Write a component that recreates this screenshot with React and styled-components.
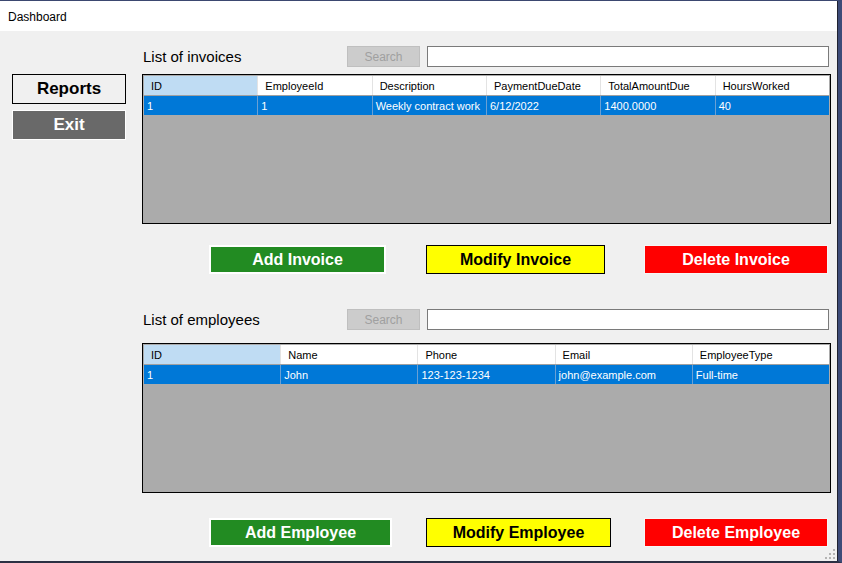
import React from 'react';
import styled, { createGlobalStyle } from 'styled-components';

const GlobalStyle = createGlobalStyle`
  body {
    margin: 0;
    overflow: hidden;
    font-family: "Liberation Sans", Arial, sans-serif;
  }
  * { box-sizing: border-box; }
`;

const Window = styled.div`
  width: 842px;
  height: 563px;
  display: flex;
  flex-direction: column;
  border-top: 1px solid #3b4770;
  border-right: 4px solid #3d4b78;
  border-bottom: 2px solid #2c3043;
`;

const Frame = styled.div`
  flex: 1;
  display: flex;
  flex-direction: column;
  border-right: 1px solid #1f2230;
`;

const TitleBar = styled.div`
  height: 30px;
  background: #ffffff;
  display: flex;
  align-items: center;
  padding: 2px 0 0 8px;
  font-size: 12px;
  color: #000;
`;

const Body = styled.div`
  flex: 1;
  display: flex;
  background: #f0f0f0;
  position: relative;
`;

const Sidebar = styled.div`
  width: 126px;
  padding: 43px 0 0 12px;
  display: flex;
  flex-direction: column;
  gap: 6px;
`;

const SideButton = styled.button`
  width: 114px;
  height: 30px;
  font-family: "Liberation Sans", Arial, sans-serif;
  font-size: 17px;
  font-weight: bold;
  padding: 0;
  cursor: pointer;
  color: ${p => (p.$dark ? '#ffffff' : '#000000')};
  background: ${p => (p.$dark ? '#696969' : '#f0f0f0')};
  border: 1px solid ${p => (p.$dark ? '#ffffff' : '#000000')};
`;

const Main = styled.div`
  width: 689px;
  margin-left: 16px;
  padding-top: 15px;
  display: flex;
  flex-direction: column;
`;

const Section = styled.div`
  display: flex;
  flex-direction: column;
  margin-top: ${p => p.$top || 0}px;
`;

const HeaderRow = styled.div`
  height: 21px;
  display: flex;
  align-items: center;
`;

const ListTitle = styled.div`
  width: 205px;
  padding-left: 1px;
  font-size: 15px;
  color: #000;
`;

const SearchButton = styled.button`
  width: 73px;
  height: 21px;
  padding: 0;
  font-family: "Liberation Sans", Arial, sans-serif;
  font-size: 12px;
  color: #a0a0a0;
  background: #cccccc;
  border: 1px solid #bfbfbf;
`;

const SearchInput = styled.input`
  flex: 1;
  height: 21px;
  margin: 0 2px 0 7px;
  border: 1px solid #7a7a7a;
  background: #fff;
  outline: none;
`;

const Grid = styled.div`
  height: 150px;
  margin-top: ${p => p.$top}px;
  border: 1px solid #000;
  padding: 1px;
  background: #ababab;
  display: flex;
  flex-direction: column;
`;

const Row = styled.div`
  display: flex;
  height: ${p => (p.$head ? 20 : 19)}px;
  background: ${p => (p.$head ? '#ffffff' : '#0078d7')};
  border-bottom: ${p => (p.$head ? '1px solid #a0a0a0' : 'none')};
`;

const Cell = styled.div`
  flex: 1;
  display: flex;
  align-items: center;
  font-size: 11px;
  white-space: nowrap;
  overflow: hidden;
  padding-left: ${p => (p.$head ? 7 : 3)}px;
  color: ${p => (p.$head ? '#000' : '#fff')};
  background: ${p => (p.$sel ? '#bfdcf3' : 'transparent')};
  border-right: 1px solid ${p => (p.$head ? '#e3e3e3' : '#6aa0d4')};
  &:last-child { border-right: none; }
`;

const ButtonRow = styled.div`
  display: grid;
  grid-template-columns: 217px 218px 184px;
  margin: ${p => p.$top}px 0 0 67px;
`;

const ActionButton = styled.button`
  width: ${p => p.$w}px;
  height: 29px;
  padding: 0;
  font-family: "Liberation Sans", Arial, sans-serif;
  font-size: 16px;
  font-weight: bold;
  cursor: pointer;
  color: ${p => (p.$kind === 'modify' ? '#000' : '#fff')};
  background: ${p =>
    p.$kind === 'add' ? '#228b22' : p.$kind === 'modify' ? '#ffff00' : '#ff0000'};
  border: ${p =>
    p.$kind === 'add' ? '2px solid #ffffff' : p.$kind === 'modify' ? '1px solid #000' : '1px solid #f6f6f6'};
`;

const Grip = styled.svg`
  position: absolute;
  right: 2px;
  bottom: 2px;
`;

const invoiceCols = ['ID', 'EmployeeId', 'Description', 'PaymentDueDate', 'TotalAmountDue', 'HoursWorked'];
const invoiceRow = ['1', '1', 'Weekly contract work', '6/12/2022', '1400.0000', '40'];
const employeeCols = ['ID', 'Name', 'Phone', 'Email', 'EmployeeType'];
const employeeRow = ['1', 'John', '123-123-1234', 'john@example.com', 'Full-time'];

const DataGrid = ({ cols, row, top }) => (
  <Grid $top={top}>
    <Row $head>
      {cols.map((c, i) => (
        <Cell key={c} $head $sel={i === 0}>{c}</Cell>
      ))}
    </Row>
    <Row>
      {row.map((v, i) => (
        <Cell key={i}>{v}</Cell>
      ))}
    </Row>
  </Grid>
);

const ListSection = ({ title, cols, row, top, gridTop, btnTop, buttons }) => (
  <Section $top={top}>
    <HeaderRow>
      <ListTitle>{title}</ListTitle>
      <SearchButton disabled>Search</SearchButton>
      <SearchInput />
    </HeaderRow>
    <DataGrid cols={cols} row={row} top={gridTop} />
    <ButtonRow $top={btnTop}>
      {buttons.map(b => (
        <ActionButton key={b.label} $kind={b.kind} $w={b.w}>{b.label}</ActionButton>
      ))}
    </ButtonRow>
  </Section>
);

export default function App() {
  return (
    <>
      <GlobalStyle />
      <Window>
        <Frame>
          <TitleBar>Dashboard</TitleBar>
          <Body>
            <Sidebar>
              <SideButton>Reports</SideButton>
              <SideButton $dark>Exit</SideButton>
            </Sidebar>
            <Main>
              <ListSection
                title="List of invoices"
                cols={invoiceCols}
                row={invoiceRow}
                gridTop={7}
                btnTop={21}
                buttons={[
                  { label: 'Add Invoice', kind: 'add', w: 177 },
                  { label: 'Modify Invoice', kind: 'modify', w: 179 },
                  { label: 'Delete Invoice', kind: 'delete', w: 184 },
                ]}
              />
              <ListSection
                title="List of employees"
                cols={employeeCols}
                row={employeeRow}
                top={35}
                gridTop={13}
                btnTop={25}
                buttons={[
                  { label: 'Add Employee', kind: 'add', w: 183 },
                  { label: 'Modify Employee', kind: 'modify', w: 185 },
                  { label: 'Delete Employee', kind: 'delete', w: 184 },
                ]}
              />
            </Main>
            <Grip width="10" height="10" viewBox="0 0 10 10">
              <g fill="#b4b4b4">
                <rect x="8" y="0" width="2" height="2" />
                <rect x="4" y="4" width="2" height="2" />
                <rect x="8" y="4" width="2" height="2" />
                <rect x="0" y="8" width="2" height="2" />
                <rect x="4" y="8" width="2" height="2" />
                <rect x="8" y="8" width="2" height="2" />
              </g>
            </Grip>
          </Body>
        </Frame>
      </Window>
    </>
  );
}
